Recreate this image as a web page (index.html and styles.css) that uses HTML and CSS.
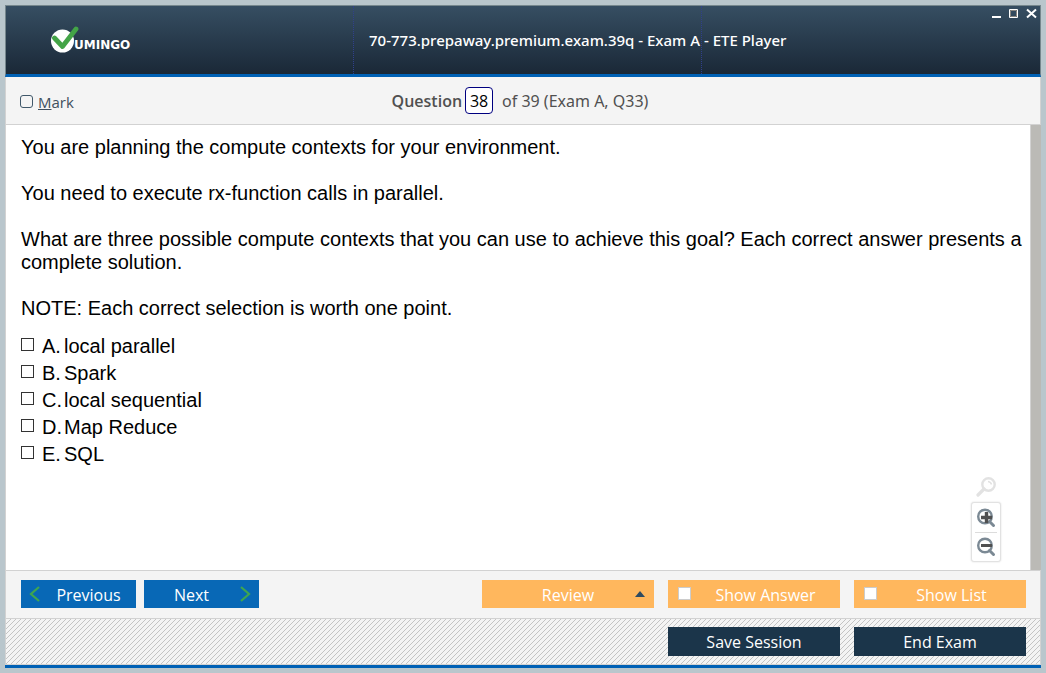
FILE: index.html
```
<!DOCTYPE html>
<html lang="en">
<head>
<meta charset="utf-8">
<meta name="viewport" content="width=device-width, initial-scale=1">
<title>70-773.prepaway.premium.exam.39q - Exam A - ETE Player</title>
<link rel="stylesheet" href="styles.css">
</head>
<body>
<div class="window">
  <header class="titlebar">
    <div class="brand">
      <svg class="brand-mark" width="30" height="28" viewBox="0 0 30 28" aria-hidden="true">
        <circle cx="11.500" cy="15" r="11.500" fill="#fff"/>
        <path d="M3.500 12 L11.500 20.500 L25 3" fill="none" stroke="#43a447" stroke-width="4.800" stroke-linecap="round" stroke-linejoin="round"/>
      </svg>
      <span class="brand-name">UMINGO</span>
    </div>
    <h1 class="title">70-773.prepaway.premium.exam.39q - Exam A - ETE Player</h1>
    <div class="window-controls">
      <button class="window-button" type="button" aria-label="Minimize"><svg width="11" height="11" viewBox="0 0 11 11"><path d="M0 8h9v2H0z" fill="#fff"/></svg></button>
      <button class="window-button" type="button" aria-label="Maximize"><svg width="11" height="11" viewBox="0 0 11 11"><path d="M.5 1.500h8v8h-8z" fill="none" stroke="#fff"/><path d="M1.500 2.500h6v6h-6z" fill="none" stroke="#8a8680"/></svg></button>
      <button class="window-button" type="button" aria-label="Close"><svg width="11" height="11" viewBox="0 0 11 11"><path d="M1 1.500l9 8M10 1.500l-9 8" fill="none" stroke="#fff" stroke-width="2"/></svg></button>
    </div>
  </header>

  <div class="question-bar">
    <label class="mark"><input class="mark-box" type="checkbox"><span><u>M</u>ark</span></label>
    <div class="position">
      <label class="position-label" for="question-number">Question</label>
      <input class="position-input" id="question-number" type="text" value="38">
      <span class="position-total">of 39 (Exam A, Q33)</span>
    </div>
  </div>

  <main class="content">
    <div class="question">
      <p>You are planning the compute contexts for your environment.</p>
      <p>You need to execute rx-function calls in parallel.</p>
      <p>What are three possible compute contexts that you can use to achieve this goal? Each correct answer presents a complete solution.</p>
      <p>NOTE: Each correct selection is worth one point.</p>
      <div class="options">
        <label class="option"><input class="option-box" type="checkbox"><span class="letter">A.</span><span>local parallel</span></label>
        <label class="option"><input class="option-box" type="checkbox"><span class="letter">B.</span><span>Spark</span></label>
        <label class="option"><input class="option-box" type="checkbox"><span class="letter">C.</span><span>local sequential</span></label>
        <label class="option"><input class="option-box" type="checkbox"><span class="letter">D.</span><span>Map Reduce</span></label>
        <label class="option"><input class="option-box" type="checkbox"><span class="letter">E.</span><span>SQL</span></label>
      </div>
    </div>
    <div class="zoom">
      <svg class="zoom-reset" width="20" height="20" viewBox="0 0 20 20" aria-hidden="true">
        <circle cx="12.500" cy="7.500" r="6.200" fill="none" stroke="#e2e2e2" stroke-width="2.400"/>
        <path d="M8 12L2 18" stroke="#e2e2e2" stroke-width="3.200" stroke-linecap="round"/>
        <path d="M12 4.500q3 .5 3.500 3" fill="none" stroke="#e2e2e2" stroke-width="1.500"/>
      </svg>
      <div class="zoom-panel">
        <button class="zoom-button" type="button" aria-label="Zoom in"><svg width="20" height="20" viewBox="0 0 20 20"><circle cx="9" cy="8.500" r="6.800" fill="none" stroke="#7b8994" stroke-width="2.400"/><path d="M13.500 13.500l4 4" stroke="#7b8994" stroke-width="3" stroke-linecap="round"/><path d="M5 9.500h11M10.500 4v11" stroke="#505050" stroke-width="3.400"/></svg></button>
        <button class="zoom-button" type="button" aria-label="Zoom out"><svg width="20" height="20" viewBox="0 0 20 20"><circle cx="9" cy="8.500" r="6.800" fill="none" stroke="#7b8994" stroke-width="2.400"/><path d="M13.500 13.500l4 4" stroke="#7b8994" stroke-width="3" stroke-linecap="round"/><path d="M5 8.500h11" stroke="#505050" stroke-width="3"/></svg></button>
      </div>
    </div>
    <div class="scroll-track"></div>
  </main>

  <footer>
    <div class="toolbar">
      <button class="button nav-button previous" type="button"><svg width="12" height="16" viewBox="0 0 12 16"><path d="M10 1L2 8l8 7" fill="none" stroke="#3fa650" stroke-width="2.200"/></svg><span class="button-text">Previous</span></button>
      <button class="button nav-button next" type="button"><span class="button-text">Next</span><svg width="12" height="16" viewBox="0 0 12 16"><path d="M2 1l8 7-8 7" fill="none" stroke="#3fa650" stroke-width="2.200"/></svg></button>
      <div class="toolbar-actions">
        <button class="button action-button review" type="button"><span class="button-text">Review</span><svg width="10" height="6" viewBox="0 0 10 6"><path d="M0 6L5 0l5 6z" fill="#2d4a60"/></svg></button>
        <label class="button action-button"><input class="action-box" type="checkbox"><span class="button-text">Show Answer</span></label>
        <label class="button action-button"><input class="action-box" type="checkbox"><span class="button-text">Show List</span></label>
      </div>
    </div>
    <div class="session-bar">
      <button class="button session-button" type="button">Save Session</button>
      <button class="button session-button" type="button">End Exam</button>
    </div>
  </footer>
</div>
</body>
</html>
```
FILE: styles.css
```
* { box-sizing: border-box; }

body {
  margin: 0;
  min-height: 100vh;
  display: flex;
  padding: 5px;
  background: #b9c6cc;
  font-family: "Open Sans", "Noto Sans", sans-serif;
}

button, input { font: inherit; margin: 0; }
button { border: 0; padding: 0; background: none; cursor: pointer; }
svg { display: block; flex: none; }

.window {
  flex: 1;
  display: flex;
  flex-direction: column;
  border-bottom: 3px solid #0061b5;
  background: #f4f4f4;
}

.titlebar {
  display: grid;
  grid-template-columns: minmax(0, 1fr) minmax(0, 1fr) 338px;
  height: 72px;
  border: 1px solid #76878d;
  border-bottom: 3px solid #0061b5;
  background: linear-gradient(#364e62, #1a2837);
}

.brand {
  display: flex;
  align-items: center;
  padding-left: 45px;
  border-right: 1px dotted #30408c;
}
.brand-name {
  margin: 10px 0 0 -7px;
  color: #fff;
  font: bold 12px/12px "DejaVu Sans", sans-serif;
}

.title {
  margin: 0;
  padding-left: 15px;
  border-right: 1px dotted #30408c;
  color: #fff;
  font-family: "Noto Sans", sans-serif;
  font-size: 15px;
  font-weight: 500;
  line-height: 68px;
  white-space: nowrap;
}

.window-controls {
  display: flex;
  justify-content: flex-end;
  align-items: flex-start;
  gap: 6px;
  padding: 2px 3px;
}

.question-bar {
  display: grid;
  grid-template-columns: 1fr auto 1fr;
  align-items: center;
  height: 48px;
  padding: 0 20px 0 14px;
  border: 1px solid #d2d2d2;
  border-top: 0;
  color: #505050;
  font-size: 16px;
  line-height: 24px;
}
.mark { display: flex; align-items: center; gap: 5px; padding-top: 2px; font-size: 15px; color: #40505e; }
.mark-box, .option-box, .action-box {
  appearance: none;
  flex: none;
  width: 13px;
  height: 13px;
  border: 1px solid #333;
  background: #fff;
}
.mark-box { border-color: #40586a; border-radius: 3px; background: none; }
.action-box { border-color: #ccc; }
.position { display: flex; align-items: center; }
.position-label { font-weight: 600; }
.position-total { font-family: "Noto Sans", sans-serif; }
.position-input {
  width: 28px;
  height: 27px;
  margin: 0 9px 0 3px;
  padding: 0;
  border: 1px solid #000080;
  border-radius: 4px;
  background: #fff;
  color: #000;
  text-align: center;
}

.content {
  flex: 1;
  display: grid;
  grid-template-columns: 1fr 11px;
  border-left: 1px solid #d2d2d2;
  background: #fff;
}
.question {
  grid-area: 1 / 1;
  padding: 11px 4px 0 15px;
  color: #000;
  font: 20px/23px "Liberation Sans", Arial, sans-serif;
}
.question p { margin: 0 0 23px; }
.options { margin-top: -10px; }
.option { display: flex; align-items: center; height: 27px; }
.option-box { margin: 0 8px 4px 0; }
.letter { width: 22px; }

.zoom {
  grid-area: 1 / 1;
  place-self: end;
  display: flex;
  flex-direction: column;
  align-items: center;
  gap: 5px;
  margin: 0 29px 8px 0;
}
.zoom-panel {
  padding: 0 3px;
  border: 1px solid #e2e2e2;
  border-radius: 3px;
  background: #fff;
  box-shadow: 0 0 2px #dcdcdc;
}
.zoom-button { display: grid; place-items: center; width: 22px; height: 29px; }
.zoom-button + .zoom-button { border-top: 1px solid #dcdcdc; }
.scroll-track { border-left: 1px solid #d2d2d2; background: #bbbab6; }

.toolbar {
  display: flex;
  align-items: center;
  gap: 8px;
  height: 49px;
  padding: 0 14px 2px 15px;
  border: 1px solid #d2d2d2;
}
.toolbar-actions { display: flex; gap: 14px; margin-left: auto; }
.button {
  display: flex;
  align-items: center;
  justify-content: center;
  height: 28px;
  color: #fff;
  font-size: 16px;
  line-height: 24px;
}
.button-text { flex: 1; padding-top: 2px; text-align: center; }
.nav-button { width: 115px; background: #0868b6; }
.previous { padding-left: 8px; }
.next { padding-right: 8px; }
.action-button { width: 172px; padding-left: 10px; background: #ffb75d; }
.review { padding: 0 9px 0 19px; }

.session-bar {
  display: flex;
  justify-content: flex-end;
  align-items: center;
  gap: 14px;
  height: 46px;
  padding: 0 14px 0 15px;
  border: 1px solid #d2d2d2;
  border-top: 0;
  background: linear-gradient(135deg, #f4f4f4 45%, #c4c4c4 45%, #c4c4c4 55%, #f4f4f4 55%) 0 0 / 5px 5px;
}
.session-button { width: 172px; height: 29px; padding-top: 1px; background: #1b354a; }
```
